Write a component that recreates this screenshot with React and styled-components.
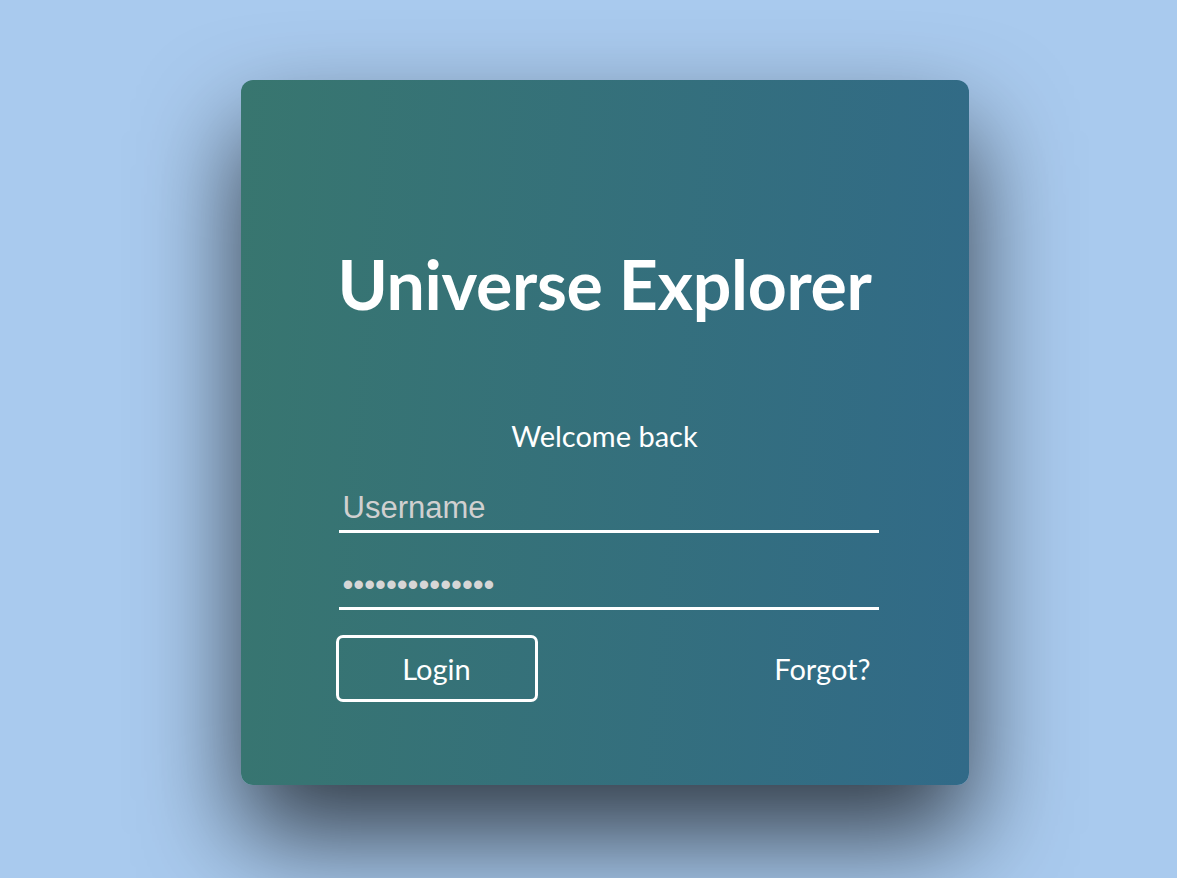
import styled, { createGlobalStyle } from 'styled-components';

const GlobalStyle = createGlobalStyle`
  html, body {
    margin: 0;
    padding: 0;
    background: #a9caee;
  }
  body {
    font-family: 'Lato', 'Liberation Sans', sans-serif;
  }
`;

const Page = styled.main`
  min-height: 878px;
  display: flex;
  justify-content: center;
  align-items: flex-start;
  padding: 80px 0 0 32px;
  box-sizing: border-box;
  overflow: hidden;
`;

const Card = styled.section`
  width: 728px;
  height: 705px;
  box-sizing: border-box;
  padding: 0 90px 0 98px;
  border-radius: 12px;
  background: linear-gradient(95deg, #38766f 0%, #316a88 100%);
  box-shadow: 0 50px 100px rgba(0, 0, 0, 0.7);
  display: flex;
  flex-direction: column;
  color: #fff;
`;

const Title = styled.h1`
  margin: 170px -60px 0 -68px;
  font-size: 68px;
  line-height: 1;
  font-weight: 700;
  letter-spacing: -0.3px;
  text-align: center;
  white-space: nowrap;
`;

const Form = styled.form`
  margin-top: 101px;
  display: flex;
  flex-direction: column;
`;

const Greeting = styled.p`
  margin: 0 0 36px -8px;
  font-size: 29px;
  line-height: 1.2;
  text-align: center;
`;

const Field = styled.input`
  width: 540px;
  margin: 0 0 ${(p) => p.$gap || 0}px;
  padding: 0 4px 4px;
  box-sizing: border-box;
  border: none;
  border-bottom: 3px solid #fff;
  background: transparent;
  outline: none;
  font-family: 'Liberation Sans', Arial, sans-serif;
  font-size: 31px;
  color: #d6d6d6;
  &::placeholder {
    color: #d0d0d0;
  }
`;

const Actions = styled.div`
  margin: 25px 0 0 -3px;
  width: 543px;
  display: flex;
  justify-content: space-between;
  align-items: center;
`;

const LoginButton = styled.button`
  width: 202px;
  height: 67px;
  border: 3px solid #fff;
  border-radius: 7px;
  background: transparent;
  color: #fff;
  font-family: inherit;
  font-size: 29px;
  cursor: pointer;
`;

const ForgotLink = styled.a`
  color: #fff;
  font-size: 29px;
  text-decoration: none;
  margin-right: 8px;
  cursor: pointer;
`;

const App = () => {
  return (
    <>
      <GlobalStyle />
      <Page>
        <Card>
          <Title>Universe Explorer</Title>
          <Form onSubmit={(e) => e.preventDefault()}>
            <Greeting>Welcome back</Greeting>
            <Field type='text' placeholder='Username' $gap={34} />
            <Field type='password' defaultValue='universe123456' />
            <Actions>
              <LoginButton type='submit'>Login</LoginButton>
              <ForgotLink>Forgot?</ForgotLink>
            </Actions>
          </Form>
        </Card>
      </Page>
    </>
  );
};

export default App;
